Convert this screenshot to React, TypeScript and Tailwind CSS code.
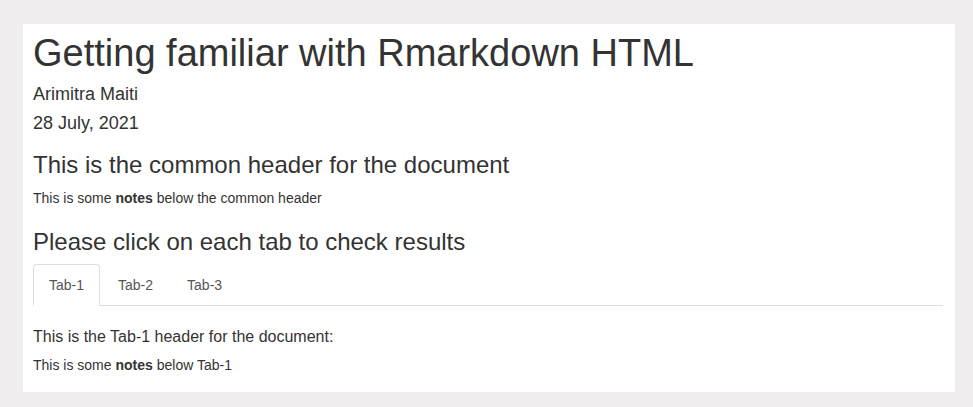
import React, { useState } from 'react';

const tabs = [
  { id: 'tab-1', label: 'Tab-1' },
  { id: 'tab-2', label: 'Tab-2' },
  { id: 'tab-3', label: 'Tab-3' },
];

export default function App() {
  const [active, setActive] = useState('tab-1');
  const current = tabs.find(t => t.id === active) || tabs[0];

  return (
    <div
      className="h-[407px] bg-[#efedee] pt-[24px] pl-[23px] text-[#333]"
      style={{ fontFamily: '"Liberation Sans", Arial, sans-serif' }}
    >
      <div className="w-[932px] h-[368px] bg-white pl-[10px] pr-[12px] pt-[8px]">
        <h1 className="text-[38px] leading-[42px] font-normal">Getting familiar with Rmarkdown HTML</h1>
        <h4 className="mt-[10px] text-[18px] leading-[20px] font-normal">Arimitra Maiti</h4>
        <h4 className="mt-[9px] text-[18px] leading-[20px] font-normal">28 July, 2021</h4>

        <h3 className="mt-[19px] text-[24px] leading-[26px] font-normal">This is the common header for the document</h3>
        <p className="mt-[10px] text-[14px] leading-[20px]">
          This is some <strong className="font-bold">notes</strong> below the common header
        </p>

        <h3 className="mt-[21px] text-[24px] leading-[26px] font-normal">Please click on each tab to check results</h3>

        <ul className="mt-[9px] flex border-b border-[#ddd] text-[14px] leading-[20px]">
          {tabs.map(t => {
            const isActive = t.id === active;
            return (
              <li key={t.id} className="-mb-px mr-[2px]">
                <button
                  onClick={() => setActive(t.id)}
                  className={
                    isActive
                      ? 'block px-[15px] py-[10px] border border-[#ddd] border-b-transparent rounded-t-[4px] bg-white text-[#555]'
                      : 'block px-[15px] py-[10px] border border-transparent rounded-t-[4px] text-[#555] hover:bg-[#eee]'
                  }
                >
                  {t.label}
                </button>
              </li>
            );
          })}
        </ul>

        <h5 className="mt-[22px] text-[16px] leading-[18px] font-normal">
          This is the {current.label} header for the document:
        </h5>
        <p className="mt-[9px] text-[14px] leading-[20px]">
          This is some <strong className="font-bold">notes</strong> below {current.label}
        </p>
      </div>
    </div>
  );
}
